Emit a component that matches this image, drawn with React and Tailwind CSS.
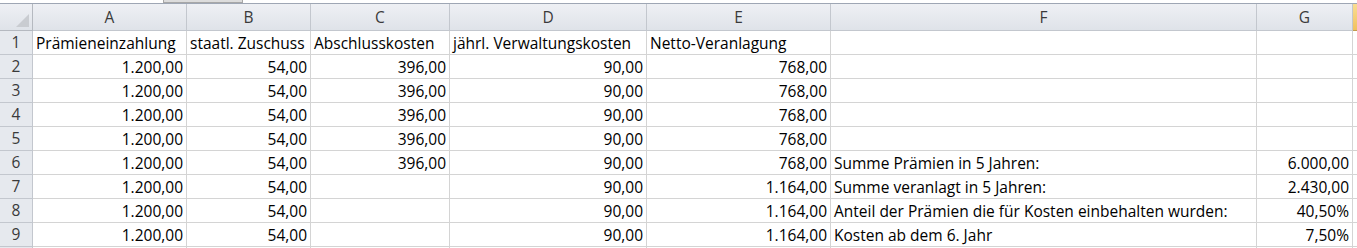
import React from 'react';

const cols = ['A', 'B', 'C', 'D', 'E', 'F', 'G', 'H'];

const rows = [
    [{ t: 'Prämieneinzahlung' }, { t: 'staatl. Zuschuss' }, { t: 'Abschlusskosten' }, { t: 'jährl. Verwaltungskosten' }, { t: 'Netto-Veranlagung' }, {}, {}, {}],
    [{ n: '1.200,00' }, { n: '54,00' }, { n: '396,00' }, { n: '90,00' }, { n: '768,00' }, {}, {}, {}],
    [{ n: '1.200,00' }, { n: '54,00' }, { n: '396,00' }, { n: '90,00' }, { n: '768,00' }, {}, {}, {}],
    [{ n: '1.200,00' }, { n: '54,00' }, { n: '396,00' }, { n: '90,00' }, { n: '768,00' }, {}, {}, {}],
    [{ n: '1.200,00' }, { n: '54,00' }, { n: '396,00' }, { n: '90,00' }, { n: '768,00' }, {}, {}, {}],
    [{ n: '1.200,00' }, { n: '54,00' }, { n: '396,00' }, { n: '90,00' }, { n: '768,00' }, { t: 'Summe Prämien in 5 Jahren:' }, { n: '6.000,00' }, {}],
    [{ n: '1.200,00' }, { n: '54,00' }, {}, { n: '90,00' }, { n: '1.164,00' }, { t: 'Summe veranlagt in 5 Jahren:' }, { n: '2.430,00' }, {}],
    [{ n: '1.200,00' }, { n: '54,00' }, {}, { n: '90,00' }, { n: '1.164,00' }, { t: 'Anteil der Prämien die für Kosten einbehalten wurden:' }, { n: '40,50%' }, {}],
    [{ n: '1.200,00' }, { n: '54,00' }, {}, { n: '90,00' }, { n: '1.164,00' }, { t: 'Kosten ab dem 6. Jahr' }, { n: '7,50%' }, {}],
];

const Cell = ({ cell }) => (
    <div
        className={
            'h-[24px] border-r border-b border-[#d4d4d4] flex items-end overflow-visible whitespace-nowrap px-[3px] pb-[1px] leading-[20px] ' +
            (cell.n ? 'justify-end' : 'justify-start')
        }
    >
        {cell.n || cell.t || ''}
    </div>
);

export default function App() {
    return (
        <div className="w-[1357px] h-[248px] overflow-hidden bg-white font-['Open_Sans',sans-serif] text-[15.5px] text-black">
            {/* strip above the sheet */}
            <div className="h-[3px] flex">
                <div className="w-[163px]" />
                <div className="w-[80px] h-[3px] bg-[#dcdcdc] border-x border-b border-[#a7a7a7]" />
            </div>
            <div className="h-px bg-[#9ea6b4]" />

            <div className="grid grid-cols-[33px_154px_124px_139px_197px_184px_426px_96px_1fr]">
                {/* column headers */}
                <div className="h-[27px] bg-gradient-to-b from-[#eef0f4] to-[#dfe3e9] border-r border-b border-[#b5b9c0] flex items-end justify-end pr-[3px] pb-[3px]">
                    <div className="w-0 h-0 border-l-[13px] border-l-transparent border-b-[13px] border-b-[#c9ccd1]" />
                </div>
                {cols.map((c) =>
                    c === 'H' ? (
                        <div key={c} className="h-[27px] bg-gradient-to-b from-[#f9dd92] to-[#f1c15f] border-b border-[#c29a4a]" />
                    ) : (
                        <div
                            key={c}
                            className="h-[27px] bg-gradient-to-b from-[#eef0f4] to-[#dfe3e9] border-r border-b border-[#c3c7ce] flex items-center justify-center pt-[2px] text-[#3a3a3a]"
                        >
                            {c}
                        </div>
                    )
                )}

                {rows.map((r, i) => (
                    <React.Fragment key={i}>
                        <div className="h-[24px] bg-[#e6e9ee] border-r border-b border-[#c3c7ce] flex items-center justify-center pt-[1px] text-[#3a3a3a]">
                            {i + 1}
                        </div>
                        {r.map((cell, j) => (
                            <Cell key={j} cell={cell} />
                        ))}
                    </React.Fragment>
                ))}

                {/* sliver of row 10 at the bottom edge */}
                <div className="h-[24px] bg-[#e6e9ee] border-r border-[#c3c7ce]" />
                {cols.map((c) => (
                    <div key={c} className="h-[24px] border-r border-[#d4d4d4]" />
                ))}
            </div>
        </div>
    );
}
